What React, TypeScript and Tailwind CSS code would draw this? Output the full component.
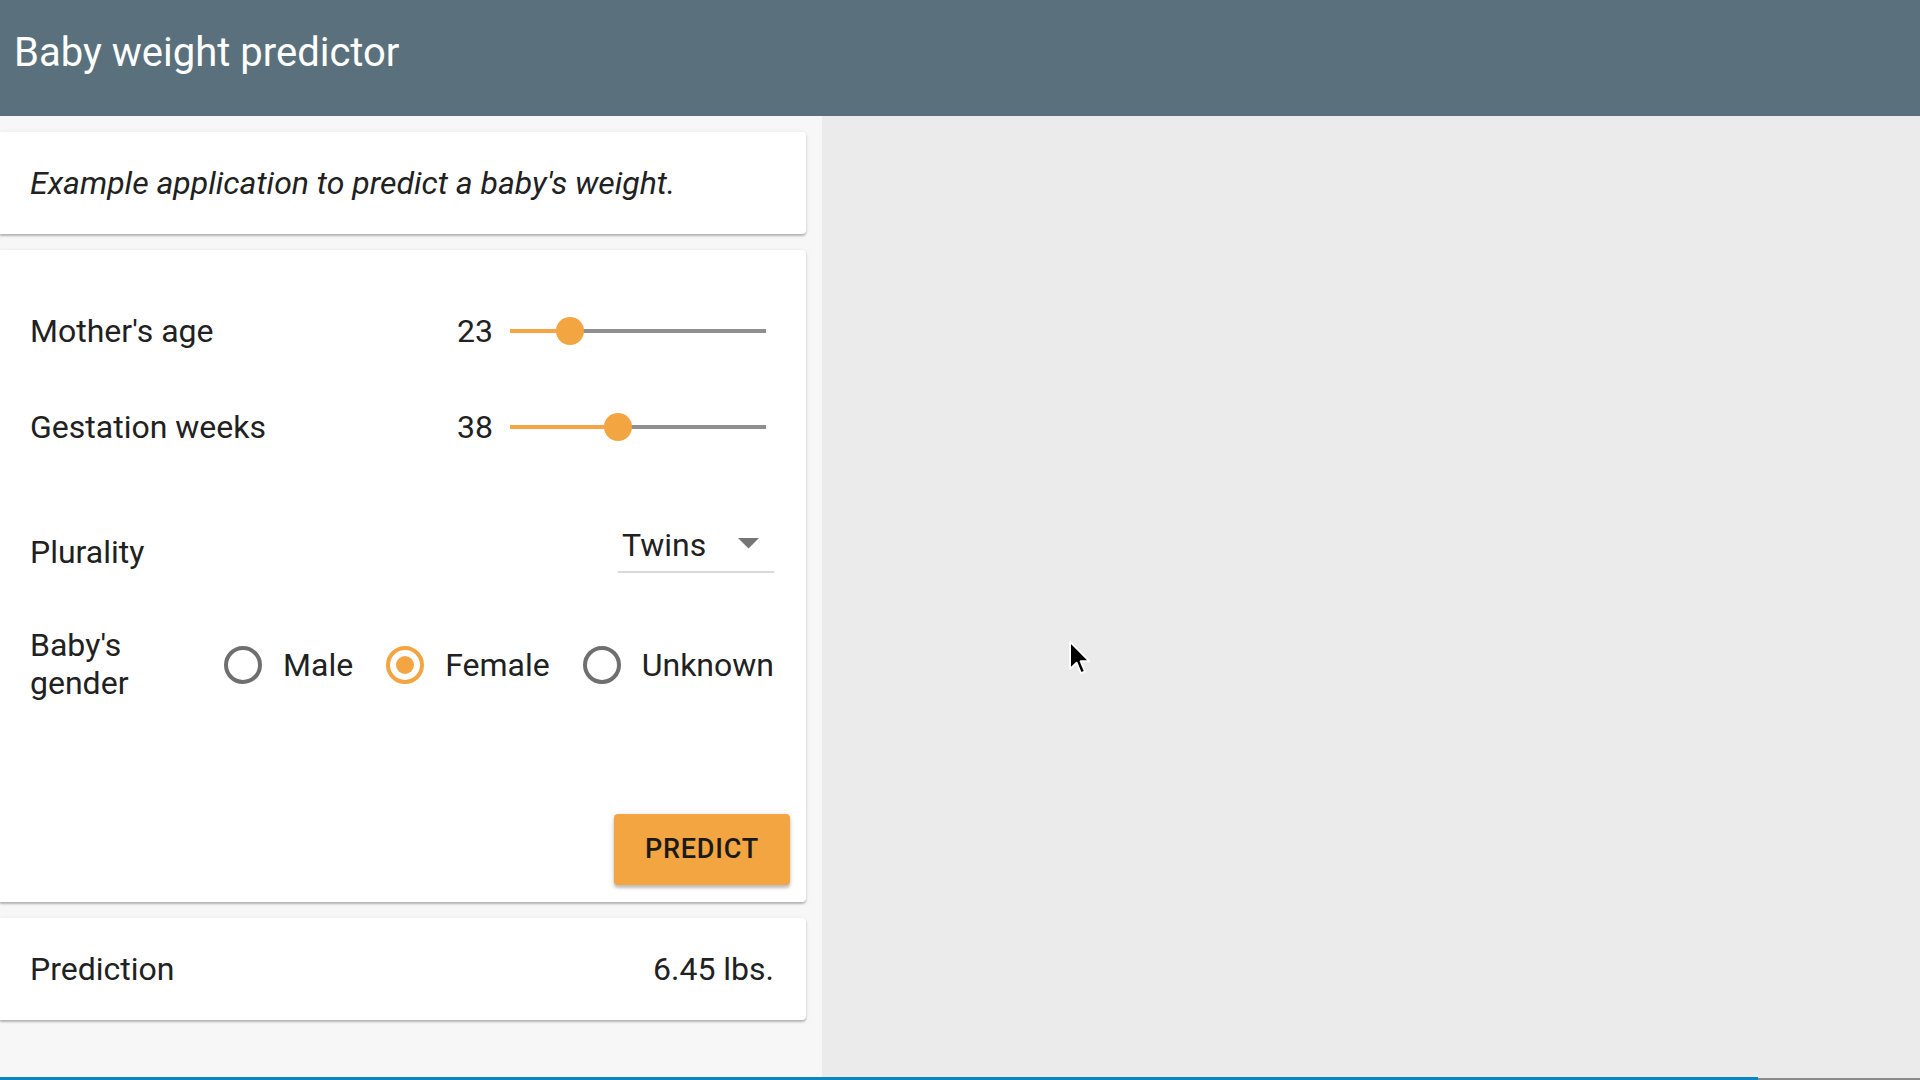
import React from 'react';

const ORANGE = '#f2a541';

function Slider({ pct }: { pct: number }) {
  return (
    <div className="relative w-[256px] h-[28px] flex items-center">
      <div className="h-[4px] w-full bg-[#8f8f8f]" />
      <div className="absolute left-0 h-[4px] bg-[#f2a541]" style={{ width: `${pct}%` }} />
      <div
        className="absolute top-0 w-[28px] h-[28px] rounded-full bg-[#f2a541] -translate-x-1/2"
        style={{ left: `${pct}%` }}
      />
    </div>
  );
}

function SliderRow({ label, value, pct, className }: { label: string; value: string; pct: number; className?: string }) {
  return (
    <div className={`flex items-center h-[36px] pl-[30px] pr-[40px] ${className ?? ''}`}>
      <span className="flex-1 text-[32px] leading-[36px]">{label}</span>
      <span className="text-[32px] leading-[36px]">{value}</span>
      <div className="ml-[17px]">
        <Slider pct={pct} />
      </div>
    </div>
  );
}

function Radio({ label, checked }: { label: string; checked?: boolean }) {
  return (
    <div className="flex items-center">
      <div
        className={`w-[38px] h-[38px] rounded-full border-[4px] flex items-center justify-center ${
          checked ? 'border-[#f2a541]' : 'border-[#6f6f6f]'
        }`}
      >
        {checked && <div className="w-[18px] h-[18px] rounded-full bg-[#f2a541]" />}
      </div>
      <span className="ml-[21px] text-[32px] leading-[36px]">{label}</span>
    </div>
  );
}

const card = 'w-[806px] bg-white rounded-r-[4px] shadow-[0_2px_2px_rgba(0,0,0,0.22),0_1px_4px_rgba(0,0,0,0.1)]';

export default function App() {
  return (
    <div className="relative w-[1920px] h-[1080px] overflow-hidden flex flex-col font-['Roboto',sans-serif] text-[#212121]">
      <header className="h-[116px] shrink-0 bg-[#5a717d] pl-[14px] pt-[33px]">
        <h1 className="text-[40px] leading-[40px] text-white font-normal">Baby weight predictor</h1>
      </header>

      <div className="flex flex-1">
        <div className="w-[822px] bg-[#f7f7f7] pt-[16px] flex flex-col gap-[16px]">
          {/* intro */}
          <div className={`${card} h-[102px] flex items-center pl-[30px]`}>
            <p className="italic text-[32px] leading-[36px]">Example application to predict a baby's weight.</p>
          </div>

          {/* form */}
          <div className={`${card} pt-[63px] pb-[17px] flex flex-col`}>
            <SliderRow label="Mother's age" value="23" pct={23.4} />
            <SliderRow label="Gestation weeks" value="38" pct={42.2} className="mt-[60px]" />

            <div className="flex items-start justify-between pl-[30px] pr-[32px] mt-[82px]">
              <span className="pt-[7px] text-[32px] leading-[36px]">Plurality</span>
              <div className="relative w-[156px] pb-[8px] border-b-[2px] border-[#d9d9d9]">
                <span className="block pl-[4px] text-[32px] leading-[36px]">Twins</span>
                <svg className="absolute right-[15px] top-[11px]" width="21" height="11" viewBox="0 0 21 11">
                  <polygon points="0,0 21,0 10.5,10.5" fill="#757575" />
                </svg>
              </div>
            </div>

            <div className="flex items-start justify-between pl-[30px] pr-[32px] mt-[53px]">
              <span className="w-[150px] text-[32px] leading-[38px]">Baby's gender</span>
              <div className="flex items-center gap-[33px] mt-[20px]">
                <Radio label="Male" />
                <Radio label="Female" checked />
                <Radio label="Unknown" />
              </div>
            </div>

            <div className="flex justify-end pr-[16px] mt-[112px]">
              <button
                className="w-[176px] h-[71px] rounded-[4px] text-[27px] font-medium tracking-[0.03em] text-[#1a1a1a] shadow-[0_3px_3px_rgba(0,0,0,0.2),0_1px_6px_rgba(0,0,0,0.12)]"
                style={{ backgroundColor: ORANGE }}
              >
                PREDICT
              </button>
            </div>
          </div>

          {/* result */}
          <div className={`${card} h-[102px] flex items-center justify-between pl-[30px] pr-[32px]`}>
            <span className="text-[32px] leading-[36px]">Prediction</span>
            <span className="text-[32px] leading-[36px]">6.45 lbs.</span>
          </div>
        </div>

        <div className="flex-1 bg-[#ebebeb]" />
      </div>

      {/* mouse pointer */}
      <svg className="absolute left-[1068px] top-[640px]" width="24" height="36" viewBox="0 0 13 20">
        <path d="M1 1 L1 16 L4.6 12.6 L7 18.4 L9.2 17.5 L6.8 11.8 L11.6 11.8 Z" fill="#000" stroke="#fff" strokeWidth="1" strokeLinejoin="round" />
      </svg>

      {/* video progress bar */}
      <div className="absolute left-0 right-0 bottom-0 h-[3px] flex items-end">
        <div className="w-[1758px] h-[3px] bg-[#0b87c0]" />
        <div className="flex-1 h-[2px] bg-[#8a8a8a]" />
      </div>
    </div>
  );
}
